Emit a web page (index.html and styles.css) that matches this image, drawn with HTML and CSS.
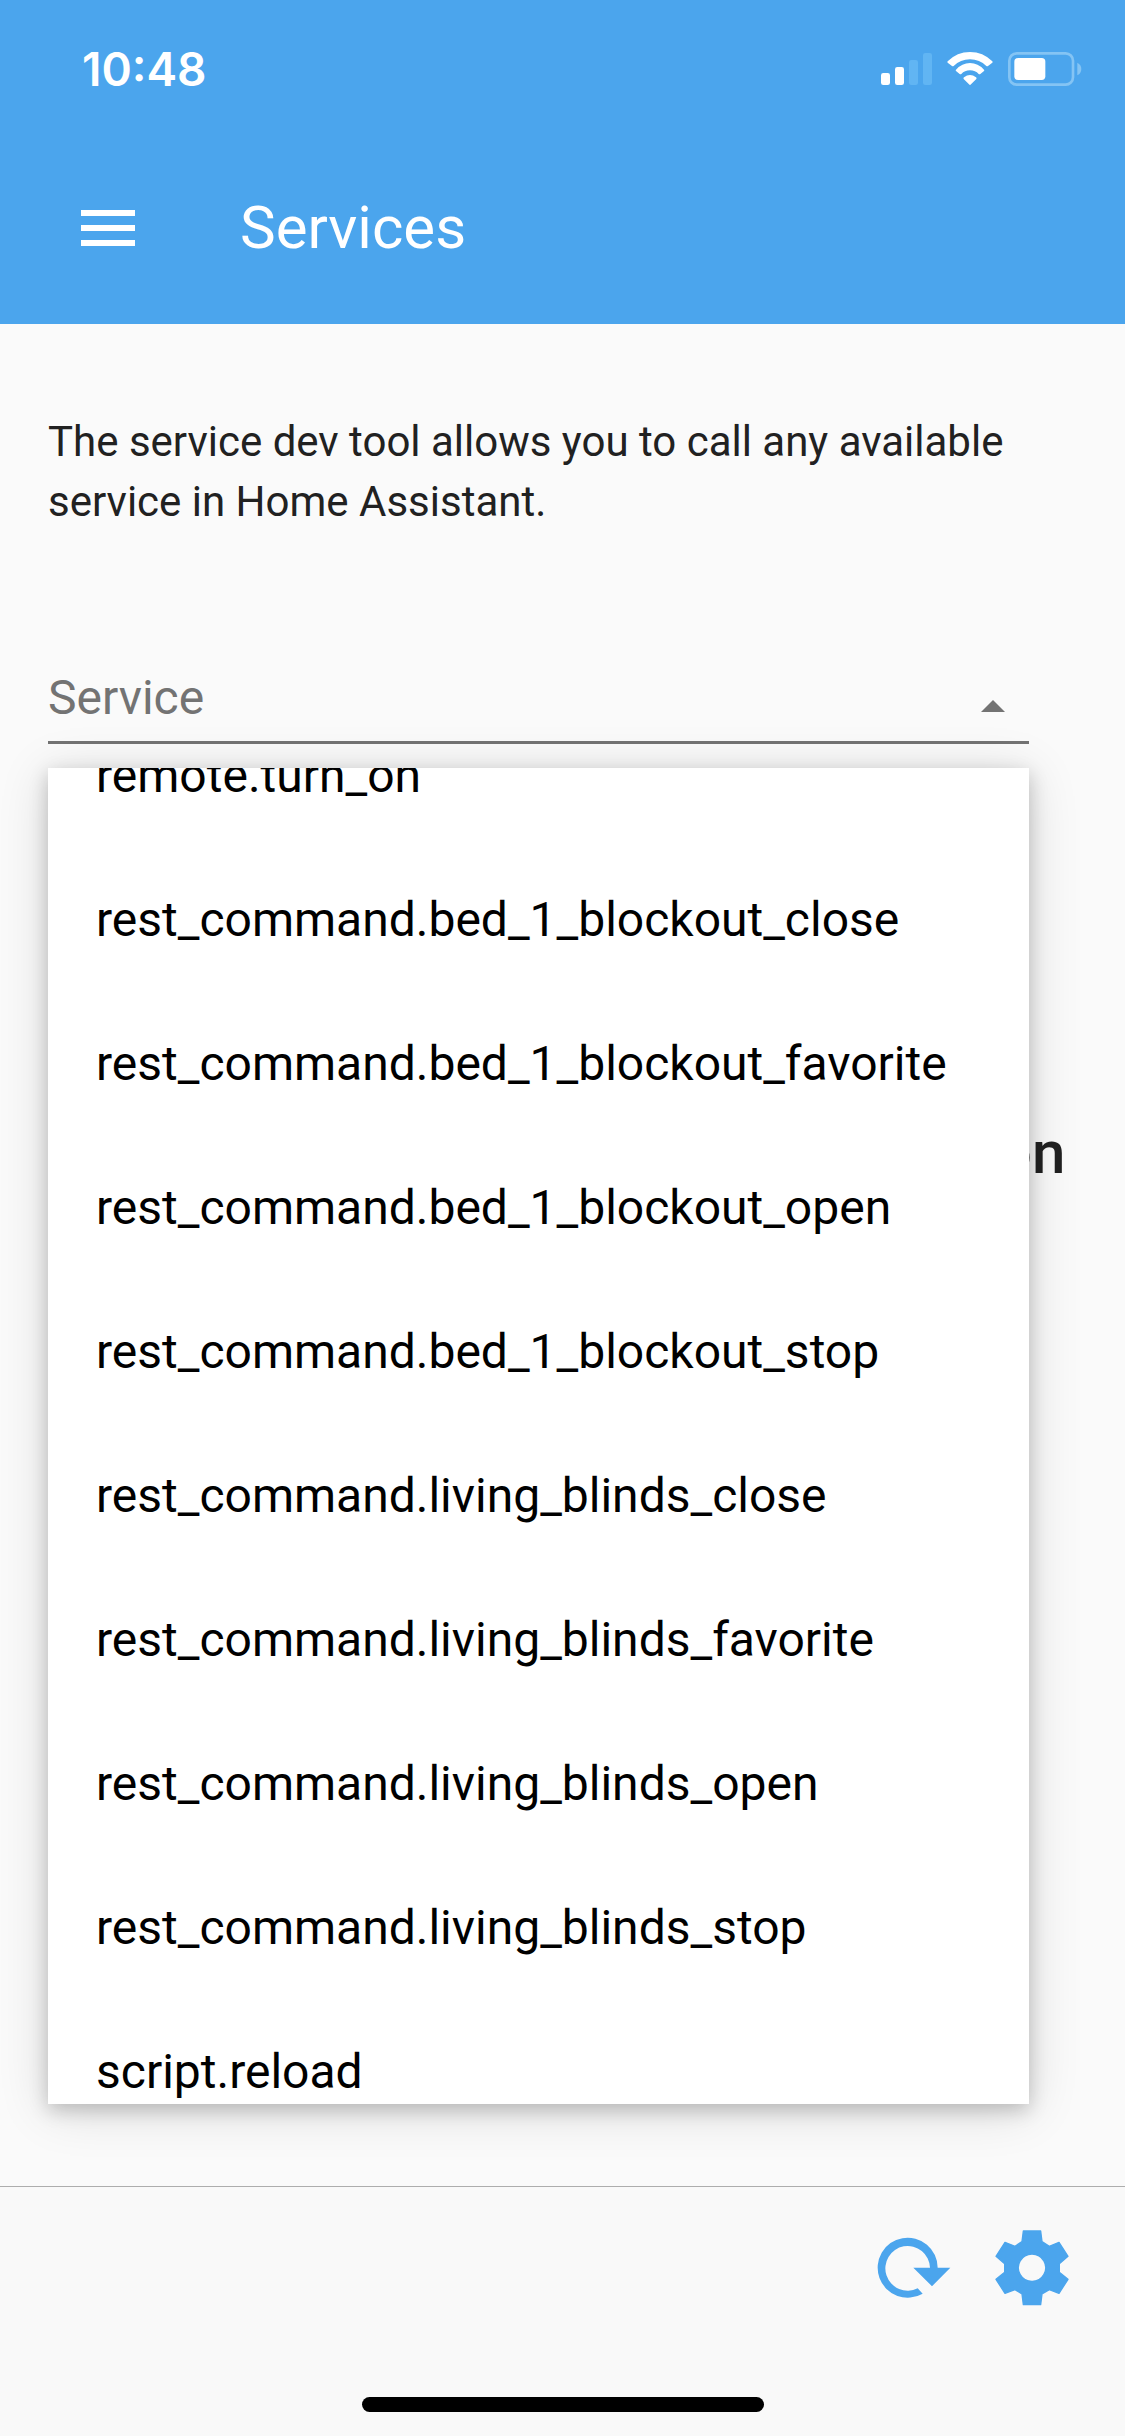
FILE: index.html
```html
<!DOCTYPE html>
<html lang="en">
<head>
<meta charset="utf-8">
<meta name="viewport" content="width=device-width, initial-scale=1">
<title>Services</title>
<link rel="stylesheet" href="styles.css">
</head>
<body>
<div class="app">
  <header class="header">
    <div class="status-bar">
      <time class="clock">10:48</time>
      <div class="status-icons">
        <svg width="51" height="34" viewBox="63 66 153 102" fill="#fff" aria-hidden="true">
          <rect x="63" y="129" width="27" height="36" rx="7"/>
          <rect x="105" y="111" width="27" height="54" rx="7"/>
          <rect class="faded-bar" x="147" y="90" width="27" height="75" rx="7"/>
          <rect class="faded-bar" x="189" y="69" width="27" height="96" rx="7"/>
        </svg>
        <svg width="46" height="34" viewBox="261 66 138 102" fill="#fff" aria-hidden="true">
          <path d="M263 94Q291 66 330 66T397 94Q399 96 397 98L384 108Q382 110 379 108Q359 88 330 88T281 108Q278 110 276 108L263 98Q261 96 263 94Z"/>
          <path d="M288 119Q306 99 330 99T372 119Q374 121 372 123L361 132Q358 134 356 132Q346 121 330 121T304 132Q302 134 299 132L288 123Q286 121 288 119Z"/>
          <path d="M312 142Q330 128 348 142Q351 144 349 147L333 163Q330 167 327 163L311 147Q309 144 312 142Z"/>
        </svg>
        <svg width="74" height="34" viewBox="443 66 222 102" aria-hidden="true">
          <rect x="447" y="70" width="191" height="94" rx="22" fill="none" stroke="#84c4f4" stroke-width="8"/>
          <rect x="462" y="84" width="93" height="66" rx="11" fill="#fff"/>
          <path d="M651 98Q663 104 663 117T651 136Z" fill="#84c4f4"/>
        </svg>
      </div>
    </div>
    <div class="toolbar">
      <button class="icon-button menu-button" type="button" aria-label="Menu">
        <svg width="54" height="36" viewBox="0 0 54 36" fill="#fff" aria-hidden="true"><path d="M0 0h54v6H0zM0 15h54v6H0zM0 30h54v6H0z"/></svg>
      </button>
      <h1 class="title">Services</h1>
    </div>
  </header>

  <main class="content">
    <p class="intro">The service dev tool allows you to call any available service in Home Assistant.</p>
    <div class="combo">
      <div class="field">
        <input class="field-input" type="text" placeholder="Service" aria-label="Service" role="combobox" aria-expanded="true" aria-controls="services">
        <button class="icon-button" type="button" aria-label="Close list">
          <svg width="24" height="12" viewBox="0 0 24 12" fill="#737373" aria-hidden="true"><path d="M12 0L24 12H0z"/></svg>
        </button>
      </div>
      <div class="dropdown">
        <ul class="options" id="services" role="listbox">
          <li class="option" role="option">remote.turn_on</li>
          <li class="option" role="option">rest_command.bed_1_blockout_close</li>
          <li class="option" role="option">rest_command.bed_1_blockout_favorite</li>
          <li class="option" role="option">rest_command.bed_1_blockout_open</li>
          <li class="option" role="option">rest_command.bed_1_blockout_stop</li>
          <li class="option" role="option">rest_command.living_blinds_close</li>
          <li class="option" role="option">rest_command.living_blinds_favorite</li>
          <li class="option" role="option">rest_command.living_blinds_open</li>
          <li class="option" role="option">rest_command.living_blinds_stop</li>
          <li class="option" role="option">script.reload</li>
        </ul>
      </div>
    </div>
    <h2 class="hint">Select a service to see the description</h2>
  </main>

  <footer class="footer">
    <div class="actions">
      <button class="icon-button" type="button" aria-label="Refresh">
        <svg width="74" height="62" viewBox="82 199 222 186" fill="#4ba5ed" aria-hidden="true"><path d="M264 291A90 90 0 1 0 219 369L204 353A67 67 0 1 1 241 291H191L247 347L302 291Z"/></svg>
      </button>
      <button class="icon-button" type="button" aria-label="Settings">
        <svg width="76" height="78" viewBox="432 175 228 234" fill="#4ba5ed" stroke="#4ba5ed" stroke-width="4" stroke-linejoin="round" aria-hidden="true"><path fill-rule="evenodd" d="M520 181H572L576 213L598 227L627 215L654 257L628 279V305L654 326L627 368L598 357L576 370L572 402H520L516 370L495 357L465 368L438 326L464 305V279L438 257L465 215L495 227L516 213ZM546 250a41 41 0 1 0 .1 0Z"/></svg>
      </button>
    </div>
    <div class="home-indicator"></div>
  </footer>
</div>
</body>
</html>
```
FILE: styles.css
```css
* {
  box-sizing: border-box;
}

body {
  margin: 0;
  background: #fafafa;
  color: #212121;
  font-family: Roboto, "Liberation Sans", sans-serif;
}

.app {
  display: flex;
  flex-direction: column;
  min-height: 100vh;
}

.icon-button {
  display: flex;
  padding: 0;
  border: 0;
  background: none;
}

svg {
  display: block;
}

.header {
  height: 324px;
  background: #4ba5ed;
  color: #fff;
}

.status-bar {
  display: flex;
  align-items: center;
  justify-content: space-between;
  height: 132px;
  padding: 6px 43px 0 82px;
}

.clock {
  font: 600 46px/54px Inter, sans-serif;
}

.status-icons {
  display: flex;
  gap: 15px;
}

.faded-bar {
  fill: #61b5f3;
}

.toolbar {
  display: flex;
  align-items: center;
  gap: 105px;
  height: 192px;
  padding: 0 48px 0 81px;
}

.title {
  margin: 0;
  font-size: 60px;
  font-weight: 400;
  line-height: 72px;
}

.content {
  flex: 1;
  padding: 88px 48px 0;
}

.intro {
  margin: 0;
  font-size: 42px;
  line-height: 60px;
}

.combo {
  position: relative;
  margin: 130px 48px 0 0;
}

.field {
  display: flex;
  align-items: center;
  padding: 0 24px 7px 0;
  border-bottom: 3px solid #737373;
}

.field .icon-button {
  padding-top: 16px;
}

.field-input {
  flex: 1;
  min-width: 0;
  height: 72px;
  padding: 0;
  border: 0;
  outline: 0;
  background: none;
  color: #212121;
  font: 400 48px/72px Roboto, "Liberation Sans", sans-serif;
}

.field-input::placeholder {
  color: #737373;
  opacity: 1;
}

/* The list opens over the page, scrolled part of the way down. */
.dropdown {
  position: absolute;
  top: calc(100% + 24px);
  left: 0;
  right: 0;
  height: 1336px;
  overflow: hidden;
  background: #fff;
  box-shadow: 0 6px 18px rgba(0, 0, 0, 0.2), 0 6px 48px rgba(0, 0, 0, 0.14);
}

.options {
  margin: -64px 0 0;
  padding: 0;
  list-style: none;
}

.option {
  padding: 0 48px;
  color: #000;
  font-size: 48px;
  line-height: 144px;
  white-space: nowrap;
}

.hint {
  margin: 373px 0 0;
  padding-right: 14px;
  font-size: 60px;
  font-weight: 500;
  line-height: 72px;
  text-align: center;
  white-space: nowrap;
}

.footer {
  display: flex;
  flex-direction: column;
  align-items: center;
  justify-content: space-between;
  height: 250px;
  padding: 42px 0 24px;
  border-top: 1px solid #adadad;
  background: #f9f9f9;
}

.actions {
  display: flex;
  align-items: center;
  align-self: flex-end;
  gap: 43px;
  padding-right: 55px;
}

.home-indicator {
  width: 402px;
  height: 15px;
  border-radius: 8px;
  background: #000;
}
```
